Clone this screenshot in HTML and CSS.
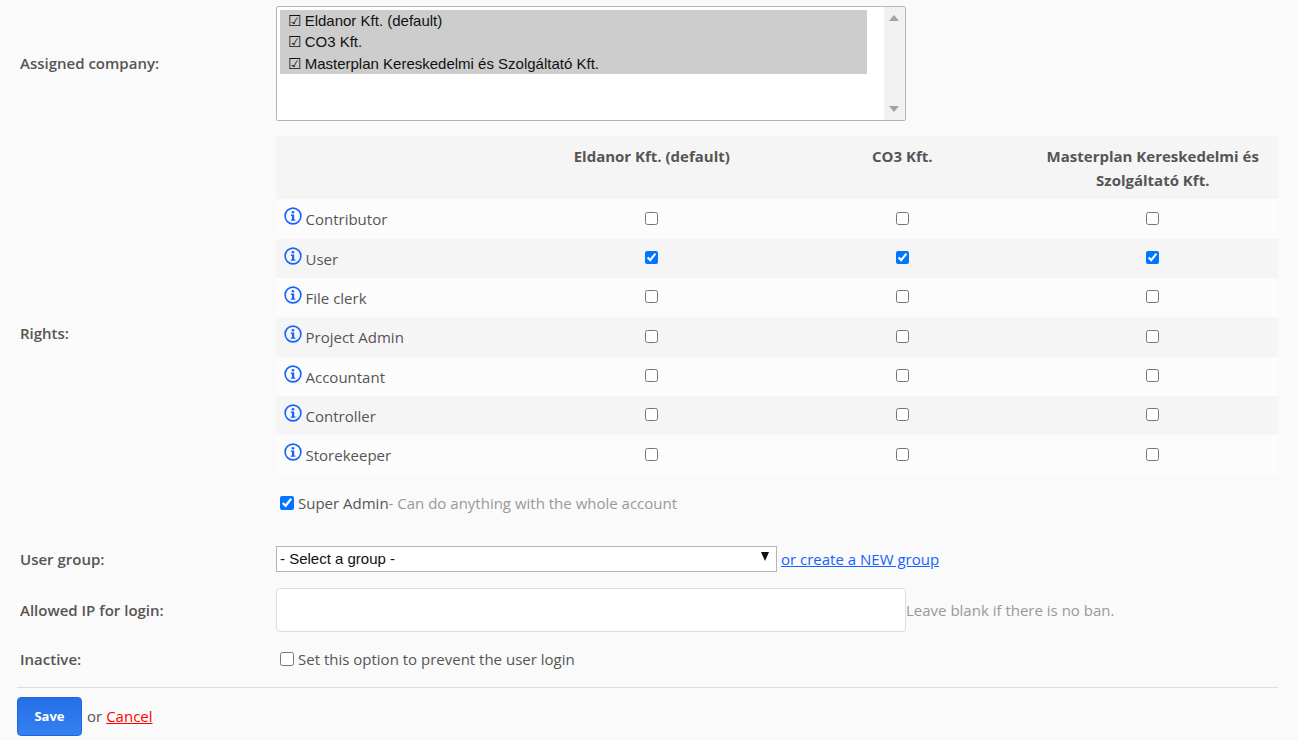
FILE: index.html
```html
<!DOCTYPE html>
<html lang="en">
<head>
<meta charset="utf-8">
<title>User rights</title>
<link rel="stylesheet" href="styles.css">
</head>
<body>
<svg class="defs" width="0" height="0" aria-hidden="true">
  <symbol id="info" viewBox="0 0 18 18">
    <circle cx="9" cy="9" r="7.9" fill="none" stroke="currentColor" stroke-width="1.6"/>
    <circle cx="9" cy="5.2" r="1.3" fill="currentColor"/>
    <path d="M6.9 7.6H10.2V12.5H11.3V13.8H6.8V12.5H8V8.9H6.9Z" fill="currentColor"/>
  </symbol>
</svg>
<form class="page">
  <div class="row row-company">
    <div class="label">Assigned company:</div>
    <div class="listbox">
      <div class="options">
        <div class="option">☑ Eldanor Kft. (default)</div>
        <div class="option">☑ CO3 Kft.</div>
        <div class="option">☑ Masterplan Kereskedelmi és Szolgáltató Kft.</div>
      </div>
      <div class="scrollbar"><span class="arrow-up"></span><span class="arrow-down"></span></div>
    </div>
  </div>

  <div class="row row-rights">
    <div class="label">Rights:</div>
    <div class="rights">
      <table class="matrix">
        <thead>
          <tr><th></th><th>Eldanor Kft. (default)</th><th>CO3 Kft.</th><th>Masterplan Kereskedelmi és Szolgáltató Kft.</th></tr>
        </thead>
        <tbody>
          <tr><td class="role"><svg class="info"><use href="#info"/></svg><span class="role-name">Contributor</span></td><td><input type="checkbox"></td><td><input type="checkbox"></td><td><input type="checkbox"></td></tr>
          <tr><td class="role"><svg class="info"><use href="#info"/></svg><span class="role-name">User</span></td><td><input type="checkbox" checked></td><td><input type="checkbox" checked></td><td><input type="checkbox" checked></td></tr>
          <tr><td class="role"><svg class="info"><use href="#info"/></svg><span class="role-name">File clerk</span></td><td><input type="checkbox"></td><td><input type="checkbox"></td><td><input type="checkbox"></td></tr>
          <tr><td class="role"><svg class="info"><use href="#info"/></svg><span class="role-name">Project Admin</span></td><td><input type="checkbox"></td><td><input type="checkbox"></td><td><input type="checkbox"></td></tr>
          <tr><td class="role"><svg class="info"><use href="#info"/></svg><span class="role-name">Accountant</span></td><td><input type="checkbox"></td><td><input type="checkbox"></td><td><input type="checkbox"></td></tr>
          <tr><td class="role"><svg class="info"><use href="#info"/></svg><span class="role-name">Controller</span></td><td><input type="checkbox"></td><td><input type="checkbox"></td><td><input type="checkbox"></td></tr>
          <tr><td class="role"><svg class="info"><use href="#info"/></svg><span class="role-name">Storekeeper</span></td><td><input type="checkbox"></td><td><input type="checkbox"></td><td><input type="checkbox"></td></tr>
        </tbody>
      </table>
      <label class="check-line super"><input type="checkbox" checked><span>Super Admin<span class="hint">- Can do anything with the whole account</span></span></label>
    </div>
  </div>

  <div class="row row-group">
    <div class="label">User group:</div>
    <div class="field">
      <div class="fake-select"><span>- Select a group -</span><span class="caret"></span></div>
      <a class="new-group" href="#">or create a NEW group</a>
    </div>
  </div>

  <div class="row row-ip">
    <div class="label">Allowed IP for login:</div>
    <div class="field">
      <input class="ip-input" type="text">
      <span class="hint">Leave blank if there is no ban.</span>
    </div>
  </div>

  <div class="row row-inactive">
    <div class="label">Inactive:</div>
    <label class="check-line"><input type="checkbox"><span>Set this option to prevent the user login</span></label>
  </div>

  <div class="actions">
    <button class="save" type="button">Save</button>
    <span class="or">or</span>
    <a class="cancel" href="#">Cancel</a>
  </div>
</form>
</body>
</html>
```

FILE: styles.css
```css
* { box-sizing: border-box; }
html, body { margin: 0; padding: 0; }
body {
  height: 740px;
  overflow: hidden;
  background: #fafafa;
  color: #555;
  font-family: "Open Sans", "Noto Sans", sans-serif;
  font-size: 15px;
  line-height: 24px;
}
.defs { position: absolute; }
.page { padding: 6px 20px 0 17px; }
.row { display: grid; grid-template-columns: 259px 1002px; align-items: center; }
.label { padding-left: 3px; font-weight: 600; color: #555; }

.row-company { height: 115px; }
.row-company .label { padding-bottom: 2px; }
.listbox {
  display: flex;
  justify-content: space-between;
  width: 630px;
  height: 115px;
  padding: 3px 0 0 3px;
  background: #fff;
  border: 1px solid #b5b5b5;
  border-radius: 2px;
  font-family: "Liberation Sans", Arial, sans-serif;
  font-size: 15px;
  color: #111;
}
.options { width: 587px; }
.option {
  height: 21.33px;
  line-height: 21.33px;
  padding-left: 7.5px;
  background: #cdcdcd;
  white-space: nowrap;
}
.scrollbar {
  position: relative;
  width: 21px;
  margin-top: -3px;
  background: #f1f1f1;
}
.arrow-up, .arrow-down { position: absolute; left: 5px; width: 0; height: 0; border: 5px solid transparent; }
.arrow-up { top: 3px; border-bottom: 6px solid #a3a3a3; }
.arrow-down { bottom: 3px; border-top: 6px solid #a3a3a3; }

.row-rights { margin-top: 15px; height: 394px; align-items: center; }
.rights { align-self: start; }
.matrix { width: 1002px; border-collapse: collapse; table-layout: fixed; }
.matrix th {
  height: 63.4px;
  padding: 8px 10px 0;
  vertical-align: top;
  background: #f5f5f5;
  font-weight: 700;
  font-size: 15px;
  line-height: 24px;
  text-align: center;
  color: #555;
}
.matrix td { height: 39.33px; padding: 0; text-align: center; vertical-align: middle; }
.matrix tbody tr:nth-child(even) td { background: #f5f5f5; }
.matrix tbody tr:nth-child(odd) td { background: #fcfcfc; }
.matrix input { margin: 0 0 6px; vertical-align: middle; }
.matrix td.role { padding-left: 7.5px; text-align: left; white-space: nowrap; vertical-align: top; }
.info { width: 18px; height: 18px; color: #1463ff; vertical-align: top; margin-top: 8px; }
.role-name { display: inline-block; margin-left: 4px; line-height: 24px; margin-top: 8px; vertical-align: top; }

.check-line { display: flex; align-items: center; }
.check-line input { width: 14px; height: 14px; margin: 0 4px 0 0; }
.check-line > span { white-space: nowrap; }
.super { margin: 16px 0 0 4px; }
.hint { color: #999; }

.field { display: flex; align-items: center; }
.row-group { margin-top: 8px; height: 42px; }
.fake-select {
  display: flex;
  justify-content: space-between;
  align-items: center;
  width: 501px;
  height: 26px;
  padding: 0 7px 0 3px;
  background: #fff;
  border: 1px solid #b5b5b5;
  font-family: "Liberation Sans", Arial, sans-serif;
  font-size: 15px;
  color: #111;
}
.caret { width: 0; height: 0; margin-bottom: 5px; border-left: 4.5px solid transparent; border-right: 4.5px solid transparent; border-top: 9px solid #111; }
.new-group { margin-left: 4px; color: #1463ff; }

.row-ip { margin-top: 8px; height: 44px; }
.ip-input {
  width: 630px;
  height: 44px;
  padding: 0 10px;
  background: #fff;
  border: 1px solid #ddd;
  border-radius: 4px;
  outline: 0;
}
.row-inactive { height: 53px; }
.row-inactive .check-line { padding-left: 4px; }
.row-inactive .check-line input { margin-right: 4px; }

.actions {
  display: flex;
  align-items: center;
  width: 1261px;
  height: 49px;
  margin-top: 2px;
  padding-top: 8px;
  border-top: 1px solid #ddd;
}
.save {
  width: 65px;
  height: 39px;
  padding: 0;
  border: 1px solid #1f66d8;
  border-radius: 4px;
  background: linear-gradient(#2570e8, #357ff2);
  color: #fff;
  font-family: "Open Sans", sans-serif;
  font-size: 13px;
  font-weight: 700;
}
.or { margin-left: 5px; }
.cancel { margin-left: 4px; color: #f00; }
```
